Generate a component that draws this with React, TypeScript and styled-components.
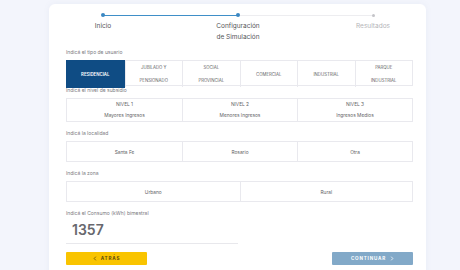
import styled, { createGlobalStyle } from 'styled-components';

const GlobalStyle = createGlobalStyle`
  html, body {
    margin: 0;
    padding: 0;
    background: #f3f5fc;
    font-family: Inter, "Open Sans", sans-serif;
  }
`;

const Card = styled.main`
  margin: 4px 0 0 49px;
  width: 377px;
  box-sizing: border-box;
  padding: 9px 13px 12px 17px;
  background: #ffffff;
  border-radius: 6px;
  box-shadow: 0 0 6px rgba(120, 130, 170, 0.08);
`;

const Steps = styled.div`
  position: relative;
  display: flex;
  justify-content: space-between;
  width: 330px;
  margin-left: 7px;

  &::before,
  &::after {
    content: '';
    position: absolute;
    top: 1.5px;
    height: 1px;
  }
  &::before {
    left: 30px;
    width: 135px;
    background: #3f8fc8;
  }
  &::after {
    left: 165px;
    width: 135px;
    background: #ededf0;
  }
`;

const Step = styled.div`
  width: 60px;
  display: flex;
  flex-direction: column;
  align-items: center;
  position: relative;
  z-index: 1;
`;

const Dot = styled.span<{ $done?: boolean }>`
  width: ${({ $done }) => ($done ? '4px' : '3px')};
  height: ${({ $done }) => ($done ? '4px' : '3px')};
  margin-top: ${({ $done }) => ($done ? '0' : '0.5px')};
  border-radius: 50%;
  background: ${({ $done }) => ($done ? '#3a87c2' : '#c4c4c8')};
`;

const StepLabel = styled.span<{ $muted?: boolean }>`
  margin-top: 4px;
  font-size: 6.5px;
  line-height: 11px;
  text-align: center;
  color: ${({ $muted }) => ($muted ? '#b4b4b8' : '#555558')};
`;

const Section = styled.section<{ $top: number }>`
  margin-top: ${({ $top }) => $top}px;
`;

const Label = styled.div`
  font-size: 5px;
  line-height: 6px;
  color: #7a7a80;
  margin-bottom: 5px;
`;

const Options = styled.div<{ $cols: number; $h: number }>`
  display: grid;
  grid-template-columns: repeat(${({ $cols }) => $cols}, 1fr);
  height: ${({ $h }) => $h}px;
  border: 1px solid #e9e9ee;
  box-sizing: border-box;
`;

const Option = styled.div<{ $active?: boolean; $lh: number; $caps?: boolean }>`
  display: flex;
  flex-direction: column;
  align-items: center;
  justify-content: center;
  text-align: center;
  font-size: ${({ $caps }) => ($caps ? '4.3px' : '4.8px')};
  line-height: ${({ $lh }) => $lh}px;
  color: ${({ $active }) => ($active ? '#ffffff' : '#5f5f66')};
  background: ${({ $active }) => ($active ? '#0f4c84' : 'transparent')};
  font-weight: ${({ $active }) => ($active ? 600 : 400)};
  border-left: 1px solid #e9e9ee;
  margin: ${({ $active }) => ($active ? '-1px 0 -1px -1px' : '0')};

  &:first-child {
    border-left: none;
  }
`;

const Amount = styled.div`
  width: 172px;
  padding: 0 0 5px 6px;
  box-sizing: border-box;
  border-bottom: 1px solid #e8e8ec;
  font-size: 14px;
  font-weight: 600;
  line-height: 17px;
  color: #68686e;
`;

const Actions = styled.div`
  display: flex;
  justify-content: space-between;
  margin-top: 8px;
`;

const Button = styled.button<{ $variant: 'back' | 'next' }>`
  width: 81px;
  height: 13px;
  border: none;
  border-radius: 1px;
  padding: 0;
  font-family: inherit;
  font-size: 4.6px;
  font-weight: 700;
  letter-spacing: 0.8px;
  display: flex;
  align-items: center;
  justify-content: center;
  gap: 4px;
  background: ${({ $variant }) => ($variant === 'back' ? '#f9c400' : '#82a9c8')};
  color: ${({ $variant }) => ($variant === 'back' ? '#5b4a10' : '#ffffff')};
`;

const Chevron = styled.svg`
  width: 4px;
  height: 5px;
`;

const userTypes = [
  ['RESIDENCIAL'],
  ['JUBILADO Y', 'PENSIONADO'],
  ['SOCIAL', 'PROVINCIAL'],
  ['COMERCIAL'],
  ['INDUSTRIAL'],
  ['PARQUE', 'INDUSTRIAL'],
];

const levels = [
  ['NIVEL 1', 'Mayores Ingresos'],
  ['NIVEL 2', 'Menores Ingresos'],
  ['NIVEL 3', 'Ingresos Medios'],
];

const places = ['Santa Fe', 'Rosario', 'Otra'];
const zones = ['Urbano', 'Rural'];

export default function App() {
  return (
    <>
      <GlobalStyle />
      <Card>
        <Steps>
          <Step>
            <Dot $done />
            <StepLabel>Inicio</StepLabel>
          </Step>
          <Step>
            <Dot $done />
            <StepLabel>
              Configuración
              <br />
              de Simulación
            </StepLabel>
          </Step>
          <Step>
            <Dot />
            <StepLabel $muted>Resultados</StepLabel>
          </Step>
        </Steps>

        <Section $top={6}>
          <Label>Indicá el tipo de usuario</Label>
          <Options $cols={6} $h={26}>
            {userTypes.map((lines, i) => (
              <Option key={i} $active={i === 0} $lh={13} $caps>
                {lines.map((l) => (
                  <span key={l}>{l}</span>
                ))}
              </Option>
            ))}
          </Options>
        </Section>

        <Section $top={1}>
          <Label>Indicá el nivel de subsidio</Label>
          <Options $cols={3} $h={24}>
            {levels.map(([a, b]) => (
              <Option key={a} $lh={11}>
                <span>{a}</span>
                <span>{b}</span>
              </Option>
            ))}
          </Options>
        </Section>

        <Section $top={8}>
          <Label>Indicá la localidad</Label>
          <Options $cols={3} $h={21}>
            {places.map((p) => (
              <Option key={p} $lh={8}>
                {p}
              </Option>
            ))}
          </Options>
        </Section>

        <Section $top={8}>
          <Label>Indicá la zona</Label>
          <Options $cols={2} $h={21}>
            {zones.map((z) => (
              <Option key={z} $lh={8}>
                {z}
              </Option>
            ))}
          </Options>
        </Section>

        <Section $top={8}>
          <Label>Indicá el Consumo (kWh) bimestral</Label>
          <Amount>1357</Amount>
        </Section>

        <Actions>
          <Button $variant="back">
            <Chevron viewBox="0 0 4 6">
              <path d="M3 0.8 L1 3 L3 5.2" fill="none" stroke="currentColor" strokeWidth="0.9" />
            </Chevron>
            ATRÁS
          </Button>
          <Button $variant="next">
            CONTINUAR
            <Chevron viewBox="0 0 4 6">
              <path d="M1 0.8 L3 3 L1 5.2" fill="none" stroke="currentColor" strokeWidth="0.9" />
            </Chevron>
          </Button>
        </Actions>
      </Card>
    </>
  );
}
